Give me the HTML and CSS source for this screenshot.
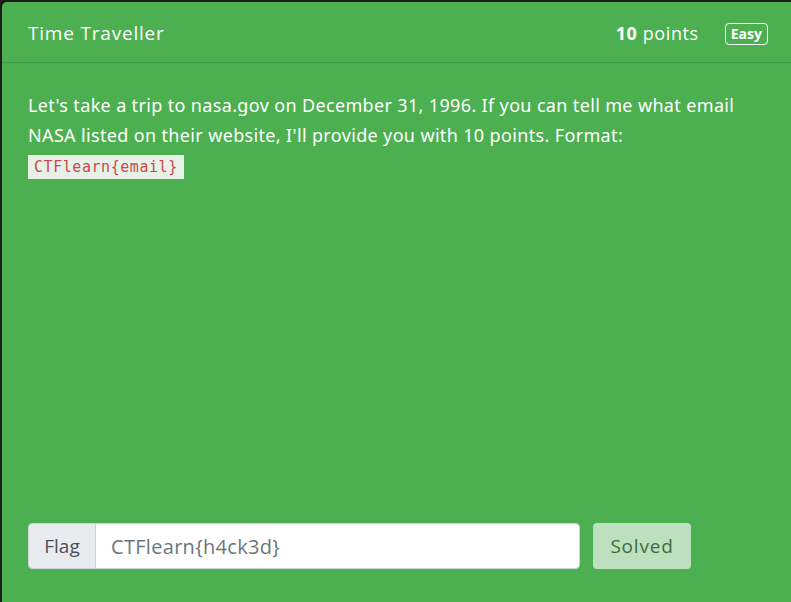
FILE: index.html
```html
<!DOCTYPE html>
<html>
<head>
<meta charset="utf-8">
<link rel="stylesheet" href="styles.css">
</head>
<body>
<div class="card">
  <div class="card-header">
    <div class="title">Time Traveller</div>
    <div class="meta">
      <span class="points"><b>10</b> points</span>
      <span class="badge">Easy</span>
    </div>
  </div>
  <div class="card-body">
    <p class="desc">Let's take a trip to nasa.gov on December 31, 1996. If you can tell me what email NASA listed on their website, I'll provide you with 10 points. Format: <code>CTFlearn{email}</code></p>
    <div class="flag-row">
      <div class="input-group">
        <span class="addon">Flag</span>
        <span class="field">CTFlearn{h4ck3d}</span>
      </div>
      <button class="btn-solved">Solved</button>
    </div>
  </div>
</div>
</body>
</html>
```
FILE: styles.css
```css
html, body {
  margin: 0;
  padding: 0;
  overflow: hidden;
  height: 100%;
}
body {
  background: #1c1c1c;
  padding: 2px 0 0 2px;
  box-sizing: border-box;
}
.card {
  width: 810px;
  height: 700px;
  background: #4caf50;
  border-radius: 5px 0 0 0;
  display: flex;
  flex-direction: column;
}
.card-header {
  height: 60px;
  border-bottom: 1px solid #43994a;
  display: flex;
  align-items: center;
  padding: 0 44px 0 26px;
  justify-content: space-between;
  font-family: "Open Sans", sans-serif;
  color: #fff;
}
.title {
  font-size: 19px;
  letter-spacing: 0.8px;
  padding-top: 1px;
}
.meta {
  display: flex;
  align-items: center;
  gap: 26px;
}
.points {
  font-size: 18px;
  letter-spacing: 0.6px;
  padding-top: 2px;
}
.points b { font-weight: 700; }
.badge {
  font-family: "Noto Sans", sans-serif;
  font-weight: 700;
  font-size: 14px;
  border: 1px solid #fff;
  border-radius: 4px;
  padding: 1px 5px;
  line-height: 18px;
  margin-top: 4px;
}
.card-body {
  padding: 26px 26px 0 26px;
  width: 739px;
  flex: 1;
  display: flex;
  flex-direction: column;
}
.desc {
  margin: 0;
  font-family: "Noto Sans", sans-serif;
  font-size: 18px;
  letter-spacing: 0.35px;
  line-height: 30px;
  color: #fff;
  width: 739px;
  padding-top: 1px;
}
code {
  font-family: "DejaVu Sans Mono", monospace;
  font-size: 15px;
  letter-spacing: 0.55px;
  color: #c94a4e;
  background: #e8f1e8;
  padding: 3px 6px 3px 6px;
}
.flag-row {
  margin-top: 341px;
  display: flex;
  gap: 13px;
  align-items: stretch;
}
.input-group {
  display: flex;
  width: 552px;
  height: 46px;
  box-sizing: border-box;
  border-radius: 4px;
  overflow: hidden;
  border: 1px solid #ced4da;
  font-family: "Open Sans", sans-serif;
  font-size: 19px;
}
.addon {
  width: 66px;
  background: #e9ecef;
  border-right: 1px solid #ced4da;
  color: #495057;
  display: flex;
  align-items: center;
  justify-content: center;
}
.field {
  flex: 1;
  background: #fff;
  color: #6c757d;
  display: flex;
  align-items: center;
  padding-left: 15px;
  font-size: 20px;
  letter-spacing: 0.3px;
}
.btn-solved {
  width: 98px;
  height: 46px;
  border: none;
  border-radius: 4px;
  background: #bde0bf;
  color: #3f6b41;
  font-family: "Open Sans", sans-serif;
  font-size: 19px;
  letter-spacing: 0.8px;
  padding: 0;
}
```
